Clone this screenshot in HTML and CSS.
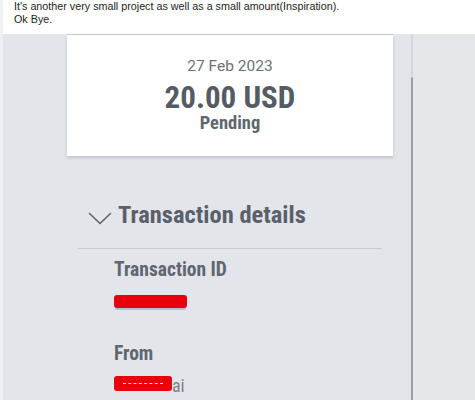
FILE: index.html
```html
<!DOCTYPE html>
<html>
<head>
<meta charset="utf-8">
<link rel="stylesheet" href="styles.css">
</head>
<body>
<div class="post-text">
  <p>It's another very small project as well as a small amount(Inspiration).</p>
  <p>Ok Bye.</p>
</div>
<div class="photo">
  <div class="edge"></div>
  <div class="screen">
    <div class="card">
      <div class="date">27 Feb 2023</div>
      <div class="amount">20.00 USD</div>
      <div class="status">Pending</div>
    </div>
    <div class="details">
      <div class="details-head">
        <svg class="chevron" width="24" height="13" viewBox="0 0 24 13"><path d="M1 1 L12 11.5 L23 1" fill="none" stroke="#5c636d" stroke-width="1.6"/></svg>
        <span class="details-title">Transaction details</span>
      </div>
      <div class="field field-id">
        <div class="label">Transaction ID</div>
        <div class="value"><span class="redact r1"></span></div>
      </div>
      <div class="field field-from">
        <div class="label">From</div>
        <div class="value"><span class="redact r2"><span class="dash"></span></span><span class="tail">ai</span></div>
      </div>
    </div>
  </div>
  <div class="rule"></div>
  <div class="side"></div>
</div>
</body>
</html>
```
FILE: styles.css
```css
html, body {
  margin: 0;
  padding: 0;
  background: #ffffff;
  width: 475px;
  height: 400px;
  overflow: hidden;
}

.post-text {
  height: 34px;
  box-sizing: border-box;
  font-family: "Liberation Sans", Arial, sans-serif;
  font-size: 10.75px;
  line-height: 12.5px;
  color: #1c1e21;
  border-left: 3px solid #f1f1f3;
  padding-left: 11px;
}

.post-text p {
  margin: 0;
}

.photo {
  display: flex;
  height: 366px;
  background: #e3e5eb;
}

.edge {
  width: 3px;
  background: #eeeff2;
}

.screen {
  width: 408px;
  font-family: Roboto, "Liberation Sans", sans-serif;
  font-stretch: 85%;
  color: #5b626c;
}

.card {
  margin-left: 64px;
  width: 326px;
  height: 122px;
  box-sizing: border-box;
  background: #ffffff;
  border-top: 1px solid #b4ccd8;
  box-shadow: 0 2px 3px rgba(90, 96, 110, 0.25);
  display: flex;
  flex-direction: column;
  align-items: center;
  padding-top: 20px;
}

.date {
  font-size: 15.5px;
  font-stretch: 93%;
  line-height: 22px;
  color: #6c7077;
}

.amount {
  margin-top: 6px;
  font-size: 31px;
  font-weight: 700;
  line-height: 30px;
  color: #555b63;
}

.status {
  font-size: 18.5px;
  font-weight: 700;
  line-height: 20px;
  color: #60666e;
}

.details {
  margin-left: 75px;
  width: 304px;
  padding-top: 44px;
}

.details-head {
  display: flex;
  align-items: flex-start;
  gap: 6px;
  padding-left: 10px;
  height: 30px;
  padding-bottom: 18px;
  border-bottom: 1px solid #c6cad1;
}

.chevron {
  margin-top: 11.5px;
}

.details-title {
  font-size: 24.5px;
  font-weight: 700;
  line-height: 30px;
  color: #59606a;
}

.field {
  padding-left: 36px;
}

.label {
  font-size: 19.5px;
  font-weight: 700;
  color: #5f6670;
  line-height: 24px;
}

.field-id {
  margin-top: 9px;
}

.field-id .value {
  margin-top: 13px;
  height: 13px;
}

.field-from {
  margin-top: 34px;
}

.field-from .value {
  margin-top: 10px;
  height: 15px;
}

.value {
  display: flex;
  align-items: center;
}

.redact {
  display: inline-block;
  background: #e8000b;
  border-radius: 3px;
}

.r1 {
  width: 73px;
  height: 13px;
  box-shadow: 0 3px 0 -1px #b8bcc4;
}

.r2 {
  width: 58px;
  height: 15px;
  display: flex;
  align-items: center;
  justify-content: center;
}

.dash {
  width: 40px;
  border-top: 1px dashed #ffd6d6;
}

.tail {
  font-size: 18px;
  color: #7d838c;
  line-height: 15px;
  padding-top: 3px;
}

.rule {
  width: 2px;
  background: linear-gradient(to bottom, #d3d6dc 0, #d3d6dc 43px, #9aa0a9 44px, #9aa0a9 100%);
}

.side {
  flex: 1;
  background: #e5e6ea;
}
```
